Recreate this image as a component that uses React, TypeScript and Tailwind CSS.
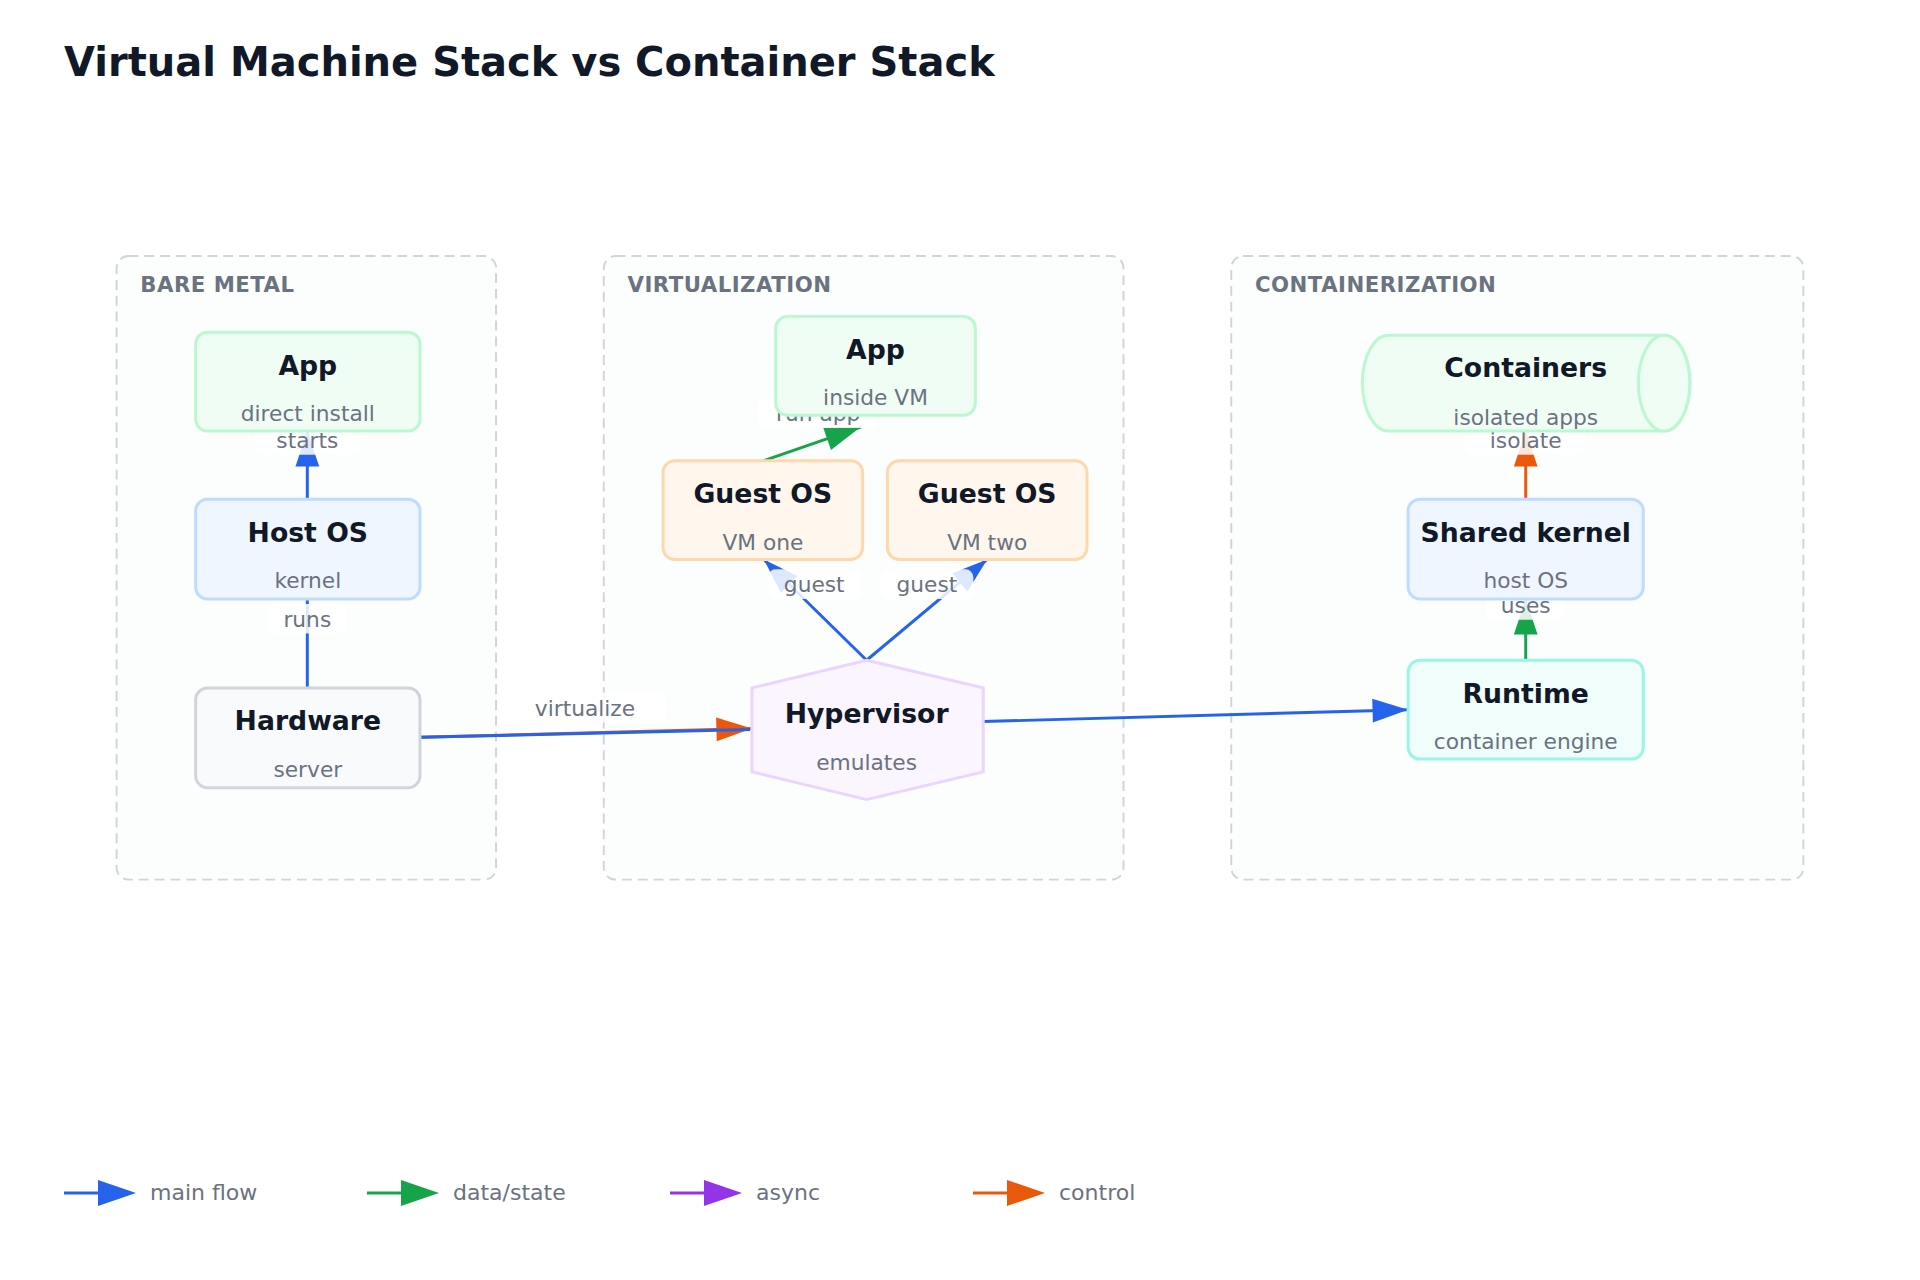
const FONT = '"DejaVu Sans", "Liberation Sans", sans-serif'

type Box = { x: number; y: number; w: number; h: number; title: string; sub: string; fill: string; stroke: string }

const BOXES: Box[] = [
  { x: 198, y: 336, w: 227, h: 100, title: 'App', sub: 'direct install', fill: '#f0fdf4', stroke: '#bbf7d0' },
  { x: 198, y: 505, w: 227, h: 101, title: 'Host OS', sub: 'kernel', fill: '#eff6ff', stroke: '#bfdbfe' },
  { x: 198, y: 696, w: 227, h: 101, title: 'Hardware', sub: 'server', fill: '#f9fafb', stroke: '#d1d5db' },
  { x: 785, y: 320, w: 202, h: 100, title: 'App', sub: 'inside VM', fill: '#f0fdf4', stroke: '#bbf7d0' },
  { x: 671, y: 466, w: 202, h: 100, title: 'Guest OS', sub: 'VM one', fill: '#fff7ed', stroke: '#fed7aa' },
  { x: 898, y: 466, w: 202, h: 100, title: 'Guest OS', sub: 'VM two', fill: '#fff7ed', stroke: '#fed7aa' },
  { x: 1425, y: 505, w: 238, h: 101, title: 'Shared kernel', sub: 'host OS', fill: '#eff6ff', stroke: '#bfdbfe' },
  { x: 1425, y: 668, w: 238, h: 100, title: 'Runtime', sub: 'container engine', fill: '#f0fdfa', stroke: '#99f6e4' },
]

const GROUPS = [
  { x: 118, w: 384, label: 'BARE METAL' },
  { x: 611, w: 526, label: 'VIRTUALIZATION' },
  { x: 1246, w: 579, label: 'CONTAINERIZATION' },
]

const COLORS: Record<string, string> = { blue: '#2563eb', green: '#16a34a', purple: '#9333ea', orange: '#ea580c' }

type Edge = { x1: number; y1: number; x2: number; y2: number; c: string; head?: boolean }

const EDGES: Edge[] = [
  { x1: 311, y1: 696, x2: 311, y2: 606, c: 'blue' },
  { x1: 311, y1: 505, x2: 311, y2: 436, c: 'blue', head: true },
  { x1: 773, y1: 466, x2: 871, y2: 432, c: 'green', head: true },
  { x1: 877, y1: 668, x2: 773, y2: 566, c: 'blue', head: true },
  { x1: 877, y1: 668, x2: 999, y2: 566, c: 'blue', head: true },
  { x1: 425, y1: 746, x2: 761, y2: 737, c: 'orange', head: true },
  { x1: 425, y1: 746, x2: 759, y2: 738, c: 'blue' },
  { x1: 995, y1: 730, x2: 1425, y2: 718, c: 'blue', head: true },
  { x1: 1544, y1: 668, x2: 1544, y2: 606, c: 'green', head: true },
  { x1: 1544, y1: 505, x2: 1544, y2: 436, c: 'orange', head: true },
]

const LABELS = [
  { x: 311, y: 445, t: 'starts' },
  { x: 311, y: 626, t: 'runs' },
  { x: 828, y: 418, t: 'run app' },
  { x: 824, y: 591, t: 'guest' },
  { x: 938, y: 591, t: 'guest' },
  { x: 592, y: 716, t: 'virtualize' },
  { x: 1544, y: 612, t: 'uses' },
  { x: 1544, y: 445, t: 'isolate' },
]

function Head({ e }: { e: Edge }) {
  const dx = e.x2 - e.x1
  const dy = e.y2 - e.y1
  const len = Math.hypot(dx, dy)
  const ux = dx / len
  const uy = dy / len
  const L = 36
  const W = 12
  const bx = e.x2 - ux * L
  const by = e.y2 - uy * L
  const pts = `${e.x2},${e.y2} ${bx - uy * W},${by + ux * W} ${bx + uy * W},${by - ux * W}`
  return <polygon points={pts} fill={COLORS[e.c]} />
}

function Diagram() {
  return (
    <svg className="absolute inset-0" width={1920} height={1280} viewBox="0 0 1943 1295" style={{ fontFamily: FONT }}>
      {GROUPS.map((g) => (
        <g key={g.label}>
          <rect x={g.x} y={259} width={g.w} height={631} rx={12} fill="#fcfdfd" stroke="#d1d5db" strokeWidth={2} strokeDasharray="10 6" />
          <text x={g.x + 24} y={295} fontSize={21.5} fontWeight={700} fill="#6b7280" letterSpacing={0.5}>{g.label}</text>
        </g>
      ))}
      {EDGES.map((e, i) => (
        <g key={i}>
          <line x1={e.x1} y1={e.y1} x2={e.x2} y2={e.y2} stroke={COLORS[e.c]} strokeWidth={3} />
          {e.head && <Head e={e} />}
        </g>
      ))}
      {LABELS.map((l) => (
        <g key={l.t + l.x}>
          <rect x={l.x - l.t.length * 7 - 12} y={l.y - 15} width={l.t.length * 14 + 24} height={30} rx={8} fill="#ffffff" fillOpacity={0.85} />
          <text x={l.x} y={l.y + 8} fontSize={22} textAnchor="middle" fill="#6b7280">{l.t}</text>
        </g>
      ))}
      {BOXES.map((b, i) => (
        <g key={i}>
          <rect x={b.x} y={b.y} width={b.w} height={b.h} rx={12} fill={b.fill} stroke={b.stroke} strokeWidth={3} />
          <text x={b.x + b.w / 2} y={b.y + 43} fontSize={27} fontWeight={700} textAnchor="middle" fill="#111827">{b.title}</text>
          <text x={b.x + b.w / 2} y={b.y + 90} fontSize={22} textAnchor="middle" fill="#6b7280">{b.sub}</text>
        </g>
      ))}
      {/* hypervisor hexagon */}
      <polygon points="877,668 995,696 995,781 877,809 761,781 761,696" fill="#faf5ff" stroke="#e9d5ff" strokeWidth={3} />
      <text x={877} y={731} fontSize={27} fontWeight={700} textAnchor="middle" fill="#111827">Hypervisor</text>
      <text x={877} y={779} fontSize={22} textAnchor="middle" fill="#6b7280">emulates</text>
      {/* containers cylinder */}
      <path d="M1405,339 L1684,339 A26,48 0 0 1 1684,436 L1405,436 A26,48 0 0 1 1405,339 Z" fill="#f0fdf4" stroke="#bbf7d0" strokeWidth={3} />
      <ellipse cx={1684} cy={387.5} rx={26} ry={48.5} fill="#f0fdf4" stroke="#bbf7d0" strokeWidth={3} />
      <text x={1544} y={381} fontSize={27} fontWeight={700} textAnchor="middle" fill="#111827">Containers</text>
      <text x={1544} y={430} fontSize={22} textAnchor="middle" fill="#6b7280">isolated apps</text>
    </svg>
  )
}

const LEGEND = [
  { c: 'blue', t: 'main flow' },
  { c: 'green', t: 'data/state' },
  { c: 'purple', t: 'async' },
  { c: 'orange', t: 'control' },
]

export default function App() {
  return (
    <div className="relative flex h-[1280px] w-[1920px] flex-col bg-white" style={{ fontFamily: FONT }}>
      <Diagram />
      <h1 className="relative px-[64px] pt-[36px] text-[40px] font-bold leading-[52px] text-[#111827]">
        Virtual Machine Stack vs Container Stack
      </h1>
      <div className="flex-1" />
      <div className="relative flex px-[64px] pb-[71px]">
        {LEGEND.map((l) => (
          <div key={l.t} className="flex w-[303px] items-center gap-[14px]">
            <svg width={72} height={30}>
              <line x1={0} y1={15} x2={40} y2={15} stroke={COLORS[l.c]} strokeWidth={3} />
              <polygon points="72,15 34,2 34,28" fill={COLORS[l.c]} />
            </svg>
            <span className="text-[22px] text-[#6b7280]">{l.t}</span>
          </div>
        ))}
      </div>
    </div>
  )
}
